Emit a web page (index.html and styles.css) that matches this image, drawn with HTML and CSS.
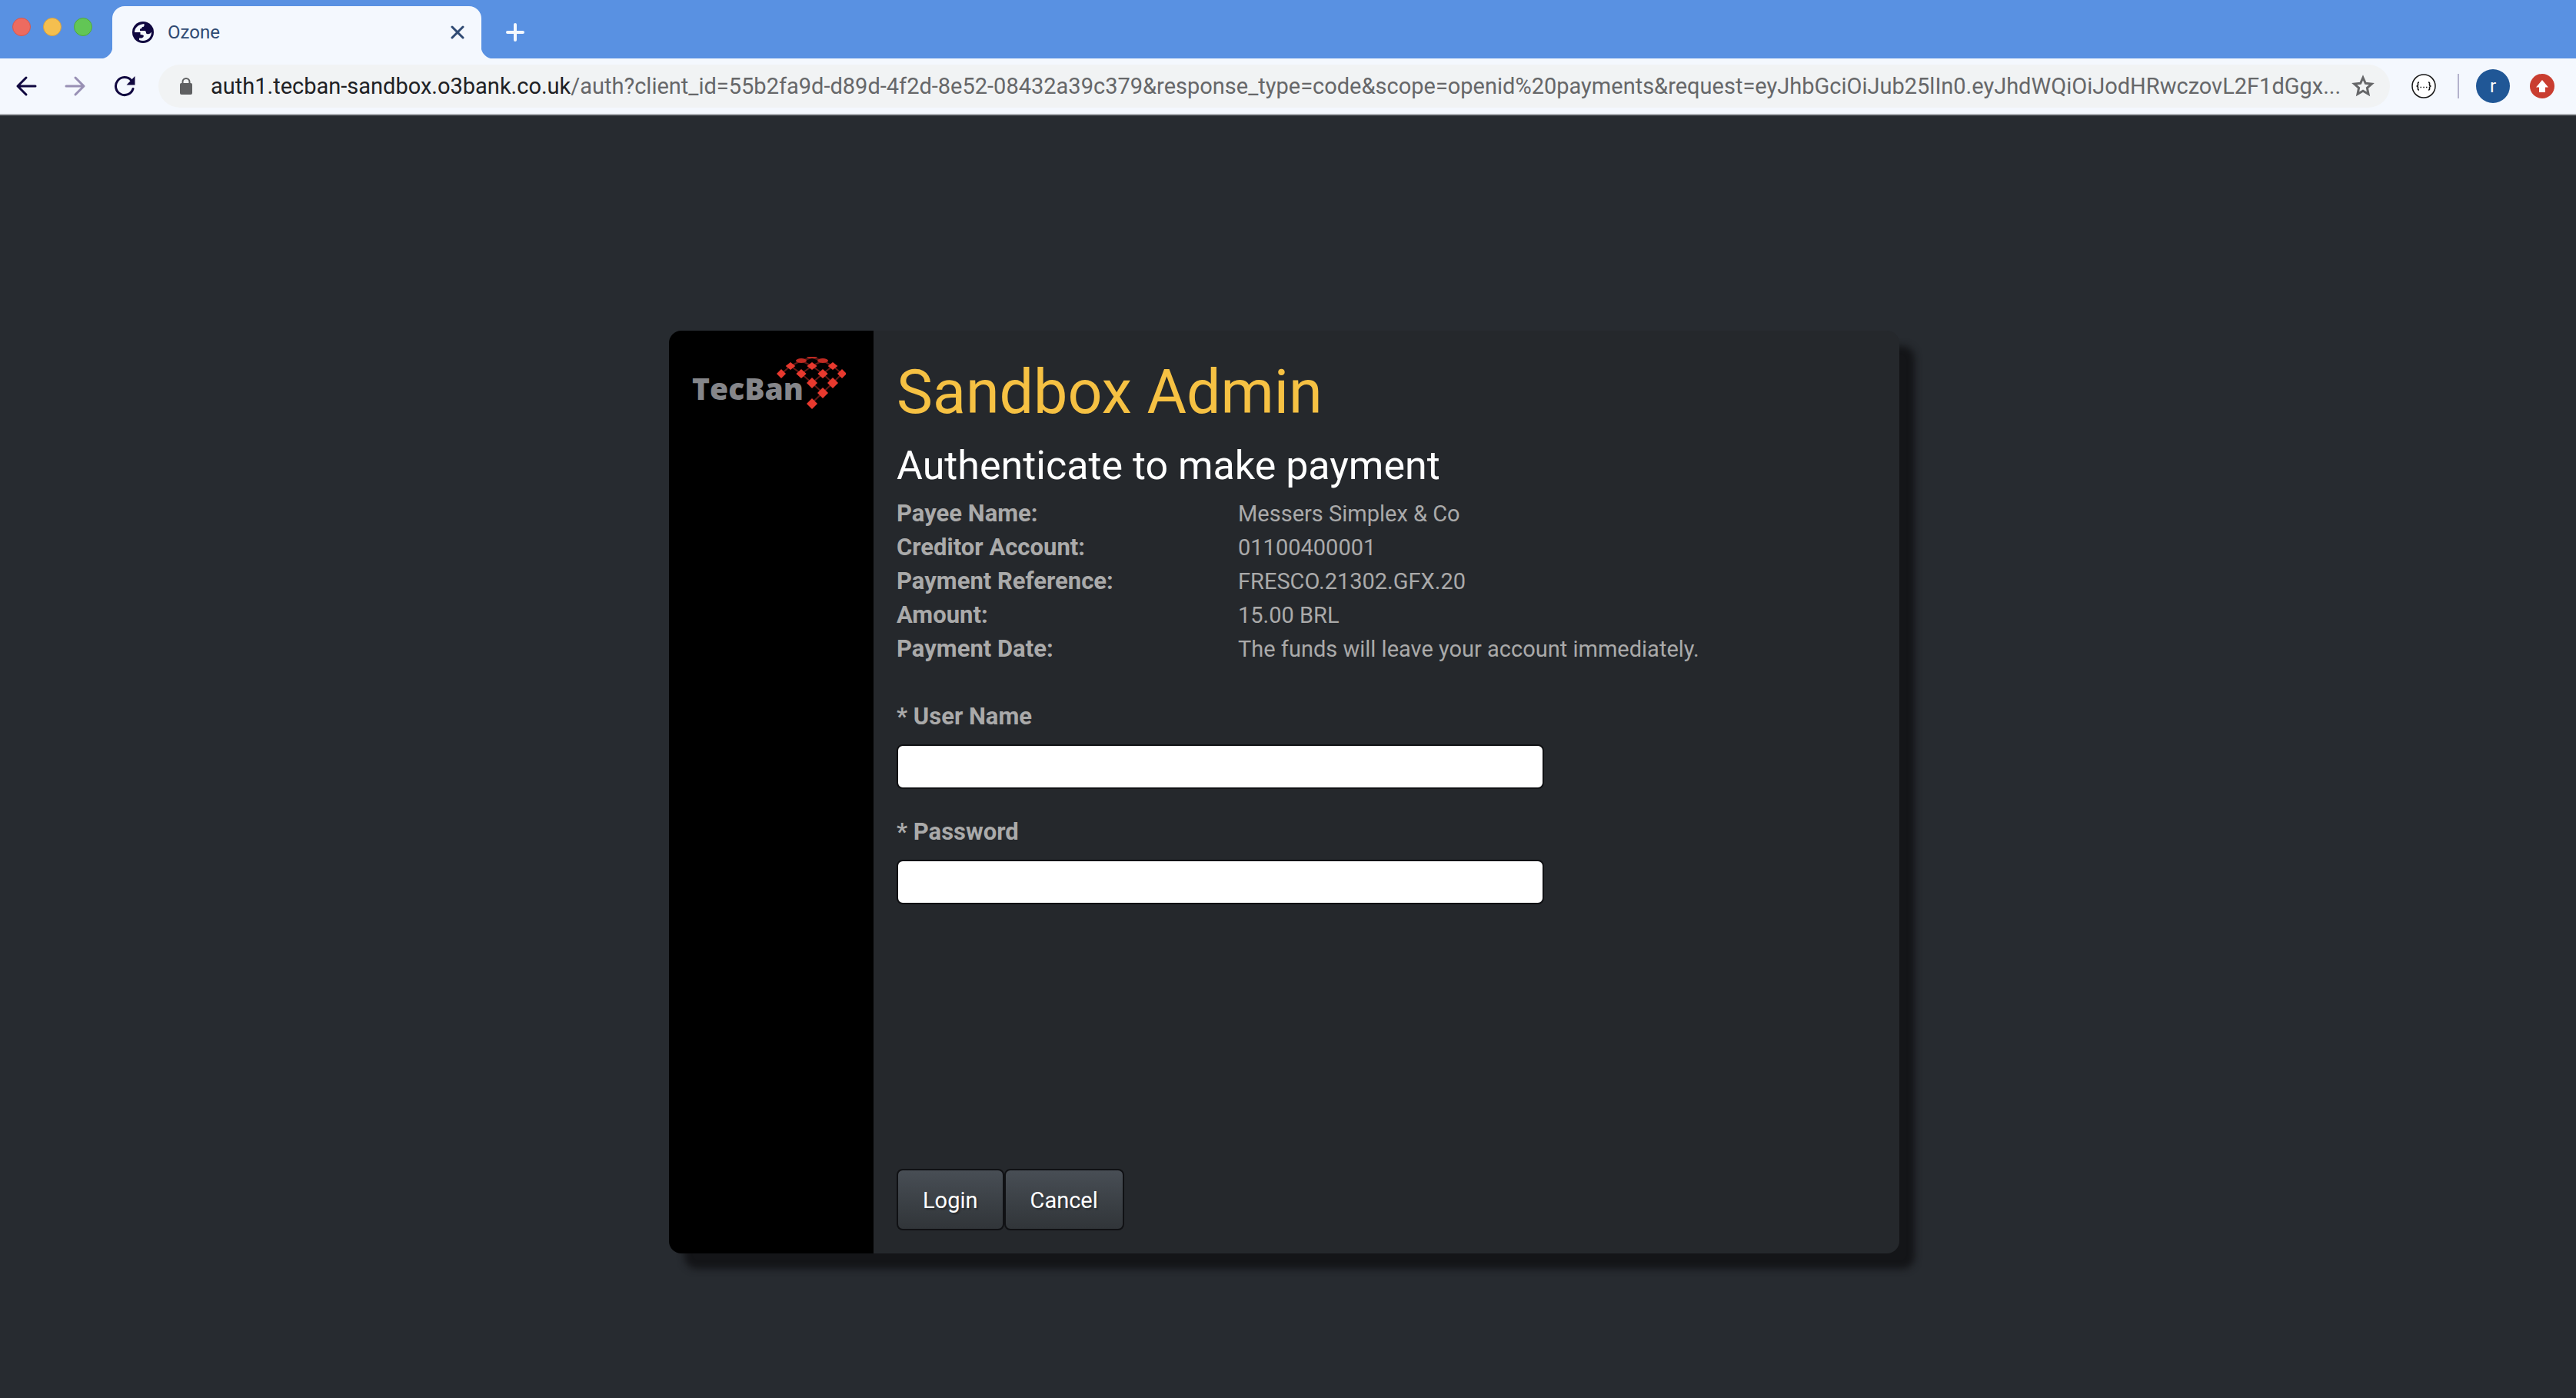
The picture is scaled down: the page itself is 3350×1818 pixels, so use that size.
FILE: index.html
```html
<!DOCTYPE html>
<html lang="en">
<head>
<meta charset="utf-8">
<meta name="viewport" content="width=device-width, initial-scale=1">
<title>Ozone</title>
<link rel="stylesheet" href="styles.css">
</head>
<body>
<header class="browser">
  <div class="tab-strip">
    <div class="window-controls">
      <button class="light light-close" type="button" aria-label="Close window"></button>
      <button class="light light-minimize" type="button" aria-label="Minimize window"></button>
      <button class="light light-zoom" type="button" aria-label="Zoom window"></button>
    </div>
    <div class="tab">
      <svg class="tab-favicon" viewBox="0 0 28 28" aria-hidden="true">
        <circle cx="14" cy="14" r="14" fill="#100840"/>
        <path d="M3 14C3 8.500 7.500 3.500 15.500 3V5.500Q15.500 7 13 7Q12.500 9.500 10 9.800V12H16Q18 12 18 15Q18.500 16.500 21 16.200Q23.500 16 25 13.500C25 20 20.500 25 14 25Q11 25 9 24V21.500H12.500Q15 20.500 15 18.500Q14 16.800 10.500 17V14Z" fill="#f4f8fe"/>
      </svg>
      <span class="tab-title">Ozone</span>
      <button class="icon-button" type="button" aria-label="Close tab">
        <svg width="18" height="18" viewBox="0 0 18 18" fill="none" stroke="#2f4a73" stroke-width="3" stroke-linecap="round" aria-hidden="true"><path d="M2 2L16 16M16 2L2 16"/></svg>
      </button>
    </div>
    <button class="icon-button new-tab" type="button" aria-label="New tab">
      <svg width="24" height="24" viewBox="0 0 24 24" fill="none" stroke="#f4f8fe" stroke-width="4" stroke-linecap="round" aria-hidden="true"><path d="M12 2V22M2 12H22"/></svg>
    </button>
  </div>
  <div class="toolbar">
    <nav class="history" aria-label="History">
      <button class="icon-button" type="button" aria-label="Back">
        <svg width="28" height="28" viewBox="0 0 28 28" fill="none" stroke="#100840" stroke-width="3" stroke-linecap="round" stroke-linejoin="round" aria-hidden="true"><path d="M26 14H3M14 3L3 14L14 25"/></svg>
      </button>
      <button class="icon-button" type="button" aria-label="Forward" disabled>
        <svg width="28" height="28" viewBox="0 0 28 28" fill="none" stroke="#9890b4" stroke-width="3" stroke-linecap="round" stroke-linejoin="round" aria-hidden="true"><path d="M2 14H25M14 3L25 14L14 25"/></svg>
      </button>
      <button class="icon-button" type="button" aria-label="Reload">
        <svg width="28" height="28" viewBox="0 0 28 28" fill="none" aria-hidden="true"><path d="M25 17.500A11.500 11.500 0 1 1 22.500 6.300" stroke="#100840" stroke-width="3" stroke-linecap="round"/><path d="M27.500 1V12.500H16.500Z" fill="#100840"/></svg>
      </button>
    </nav>
    <div class="omnibox">
      <svg class="lock" width="16" height="22" viewBox="0 0 16 22" aria-hidden="true"><path d="M3.500 8V5.500A4.500 4.500 0 0 1 12.500 5.500V8" fill="none" stroke="#5f6062" stroke-width="2"/><rect y="7" width="16" height="15" rx="2" fill="#5f6062"/></svg>
      <div class="address" role="textbox" aria-label="Address"><span class="host">auth1.tecban-sandbox.o3bank.co.uk</span>/auth?client_id=55b2fa9d-d89d-4f2d-8e52-08432a39c379&amp;response_type=code&amp;scope=openid%20payments&amp;request=eyJhbGciOiJub25lIn0.eyJhdWQiOiJodHRwczovL2F1dGgx...</div>
      <button class="icon-button" type="button" aria-label="Bookmark">
        <svg width="30" height="30" viewBox="0 0 30 30" fill="none" stroke="#666769" stroke-width="3" aria-hidden="true"><path d="M15 4L18.300 11.300L26.300 12.100L20.400 17.400L22 25.200L15 21.200L8 25.200L9.600 17.400L3.700 12.100L11.700 11.300Z"/></svg>
      </button>
    </div>
    <div class="extensions">
      <button class="icon-button" type="button" aria-label="JSON viewer">
        <svg width="32" height="32" viewBox="0 0 32 32" fill="none" stroke="#151515" aria-hidden="true"><circle cx="16" cy="16" r="15" fill="#fff" stroke-width="1.500"/><path d="M10 11C8 11 8.500 12.500 8.500 14C8.500 15.500 7.800 16 6.500 16C7.800 16 8.500 16.500 8.500 18C8.500 19.500 8 21 10 21M22 11C24 11 23.500 12.500 23.500 14C23.500 15.500 24.200 16 25.500 16C24.200 16 23.500 16.500 23.500 18C23.500 19.500 24 21 22 21" stroke-width="1.600"/><path d="M11.500 17.500H13M15.300 17.500H16.800M19 17.500H20.500" stroke-width="1.400"/></svg>
      </button>
      <span class="divider"></span>
      <button class="avatar" type="button" aria-label="Profile">r</button>
      <button class="icon-button" type="button" aria-label="Update">
        <svg width="32" height="32" viewBox="0 0 32 32" aria-hidden="true"><circle cx="16" cy="16" r="16" fill="#c93d30"/><path d="M16 8L24 17.500H20V24H12V17.500H8Z" fill="#fff"/></svg>
      </button>
    </div>
  </div>
</header>
<main class="page">
  <section class="card">
    <aside class="card-side">
      <svg class="logo" width="200" height="68" viewBox="0 0 200 68" role="img" aria-label="TecBan">
        <defs><path id="gem" d="M0 -7L7 0L0 7L-7 0Z"/></defs>
        <text class="logo-text" x="0" y="56">TecBan</text>
        <path d="M116 22L128 12L142 5L156 1L170 5L183 12L195 22L183 34L156 60M128 12L142 22L156 34L170 47M142 5L156 12L170 22L183 34M156 12L142 22M170 22L156 34M183 12L170 22M156 12L170 5M183 12L195 22" fill="none" stroke="#8a241f" stroke-width="2" opacity="0.700"/>
        <g fill="#e8392e">
          <use href="#gem" transform="translate(116 22) scale(.86)"/>
          <use href="#gem" transform="translate(128 12) scale(.9 .7)"/>
          <use href="#gem" transform="translate(156 12) scale(.95 .7)"/>
          <use href="#gem" transform="translate(183 12) scale(.9 .7)"/>
          <use href="#gem" transform="translate(142 22) scale(.95 .85)"/>
          <use href="#gem" transform="translate(170 22) scale(.95 .85)"/>
          <use href="#gem" transform="translate(195 22) scale(.86)"/>
          <use href="#gem" transform="translate(156 34)"/>
          <use href="#gem" transform="translate(183 34)"/>
          <use href="#gem" transform="translate(170 47)"/>
          <use href="#gem" transform="translate(156 61)"/>
        </g>
        <g fill="#c02a22"><ellipse cx="142" cy="5" rx="7" ry="3"/><ellipse cx="170" cy="5" rx="7" ry="3"/><ellipse cx="156" cy="0" rx="7" ry="2"/></g>
      </svg>
    </aside>
    <form class="card-main">
      <h1 class="title">Sandbox Admin</h1>
      <h2 class="subtitle">Authenticate to make payment</h2>
      <dl class="details">
        <dt>Payee Name:</dt><dd>Messers Simplex &amp; Co</dd>
        <dt>Creditor Account:</dt><dd>01100400001</dd>
        <dt>Payment Reference:</dt><dd>FRESCO.21302.GFX.20</dd>
        <dt>Amount:</dt><dd>15.00 BRL</dd>
        <dt>Payment Date:</dt><dd>The funds will leave your account immediately.</dd>
      </dl>
      <div class="field">
        <label for="username">* User Name</label>
        <input id="username" name="username" type="text">
      </div>
      <div class="field">
        <label for="password">* Password</label>
        <input id="password" name="password" type="password">
      </div>
      <div class="actions">
        <button class="button" type="submit">Login</button>
        <button class="button" type="button">Cancel</button>
      </div>
    </form>
  </section>
</main>
</body>
</html>
```
FILE: styles.css
```css
* {
  box-sizing: border-box;
}

body {
  margin: 0;
  min-height: 100vh;
  display: flex;
  flex-direction: column;
  background: #272b30;
  color: #aaaaaa;
  font-family: Roboto, "Liberation Sans", sans-serif;
  font-size: 29px;
  line-height: 44px;
}

button,
input {
  font: inherit;
}

.icon-button {
  display: flex;
  flex: none;
  margin: 0;
  padding: 0;
  border: 0;
  background: none;
}

/* Browser window */

.browser {
  border-bottom: 2px solid #a8abb0;
  background: #f4f8fe;
}

.tab-strip {
  display: flex;
  height: 76px;
  padding-top: 8px;
  background: #5991e2;
}

.window-controls {
  display: flex;
  gap: 16px;
  width: 146px;
  padding: 15px 0 0 16px;
}

.light {
  width: 24px;
  height: 24px;
  padding: 0;
  border: 1px solid;
  border-radius: 50%;
}

.light-close {
  border-color: #d6574e;
  background: #ed6b60;
}

.light-minimize {
  border-color: #d8a13e;
  background: #f5bf4f;
}

.light-zoom {
  border-color: #4fa73f;
  background: #62c655;
}

.tab {
  position: relative;
  display: flex;
  align-items: center;
  width: 480px;
  padding: 0 22px 0 26px;
  border-radius: 16px 16px 0 0;
  background: #f4f8fe;
  color: #2f4a73;
  font-size: 24px;
}

.tab::before,
.tab::after {
  content: "";
  position: absolute;
  bottom: 0;
  width: 16px;
  height: 16px;
}

.tab::before {
  right: 100%;
  background: radial-gradient(circle at 0 0, #5991e2 16px, #f4f8fe 17px);
}

.tab::after {
  left: 100%;
  background: radial-gradient(circle at 100% 0, #5991e2 16px, #f4f8fe 17px);
}

.tab-favicon {
  width: 28px;
  height: 28px;
  margin-right: 18px;
}

.tab-title {
  flex: 1;
}

.new-tab {
  align-self: center;
  margin-left: 32px;
}

.toolbar {
  display: flex;
  align-items: center;
  height: 72px;
  padding-right: 28px;
}

.history {
  display: flex;
  gap: 36px;
  padding: 0 30px 0 20px;
}

.omnibox {
  display: flex;
  flex: 1;
  align-items: center;
  min-width: 0;
  height: 56px;
  padding: 0 20px 0 28px;
  border-radius: 28px;
  background: #f1f3f4;
}

.lock {
  flex: none;
  margin-right: 24px;
}

.address {
  flex: 1;
  min-width: 0;
  overflow: hidden;
  color: #666769;
  white-space: nowrap;
}

.host {
  color: #202124;
}

.extensions {
  display: flex;
  align-items: center;
  padding-left: 28px;
}

.divider {
  width: 2px;
  height: 32px;
  margin: 0 22px 0 28px;
  background: #b4b2cc;
}

.avatar {
  width: 44px;
  height: 44px;
  margin-right: 26px;
  padding: 0;
  border: 0;
  border-radius: 50%;
  background: #205796;
  color: #ffffff;
  font-size: 24px;
}

/* Login page */

.page {
  flex: 1;
  padding: 280px 10px 188px 0;
}

.card {
  display: flex;
  max-width: 1600px;
  min-height: 1200px;
  margin: 0 auto;
  overflow: hidden;
  border-radius: 16px;
  background: #25282c;
  box-shadow: 20px 20px 10px #141518;
}

.card-side {
  flex: none;
  width: 266px;
  padding: 34px 30px;
  background: #000000;
}

.logo {
  display: block;
}

.logo-text {
  fill: #85868a;
  font-family: "Open Sans", "Noto Sans", sans-serif;
  font-size: 39px;
  font-weight: 800;
}

.card-main {
  display: flex;
  flex: 1;
  flex-direction: column;
  padding: 30px;
}

.title {
  margin: 0;
  color: #f6c143;
  font-size: 79px;
  font-weight: 400;
  line-height: 100px;
}

.subtitle {
  margin: 10px 0 0;
  color: #ffffff;
  font-size: 52px;
  font-weight: 400;
  line-height: 72px;
}

.details {
  display: grid;
  grid-template-columns: 444px 1fr;
  margin: 0 0 44px;
  padding-top: 4px;
}

.details dt,
.field label {
  font-size: 31px;
  font-weight: 700;
}

.details dd {
  margin: 0;
}

.field {
  display: flex;
  flex-direction: column;
  gap: 14px;
  margin-bottom: 34px;
}

.field input {
  width: 100%;
  max-width: 842px;
  height: 58px;
  padding: 0 16px;
  border: 2px solid #101114;
  border-radius: 8px;
  background: #ffffff;
  color: #272b30;
}

.actions {
  display: flex;
  margin-top: auto;
}

.button {
  height: 80px;
  padding: 2px 32px 0;
  border: 2px solid #101114;
  border-radius: 8px;
  background: linear-gradient(#484e55, #3a3f44 60%, #313539);
  color: #ffffff;
  text-shadow: 2px 2px 2px rgba(0, 0, 0, 0.3);
}
```
